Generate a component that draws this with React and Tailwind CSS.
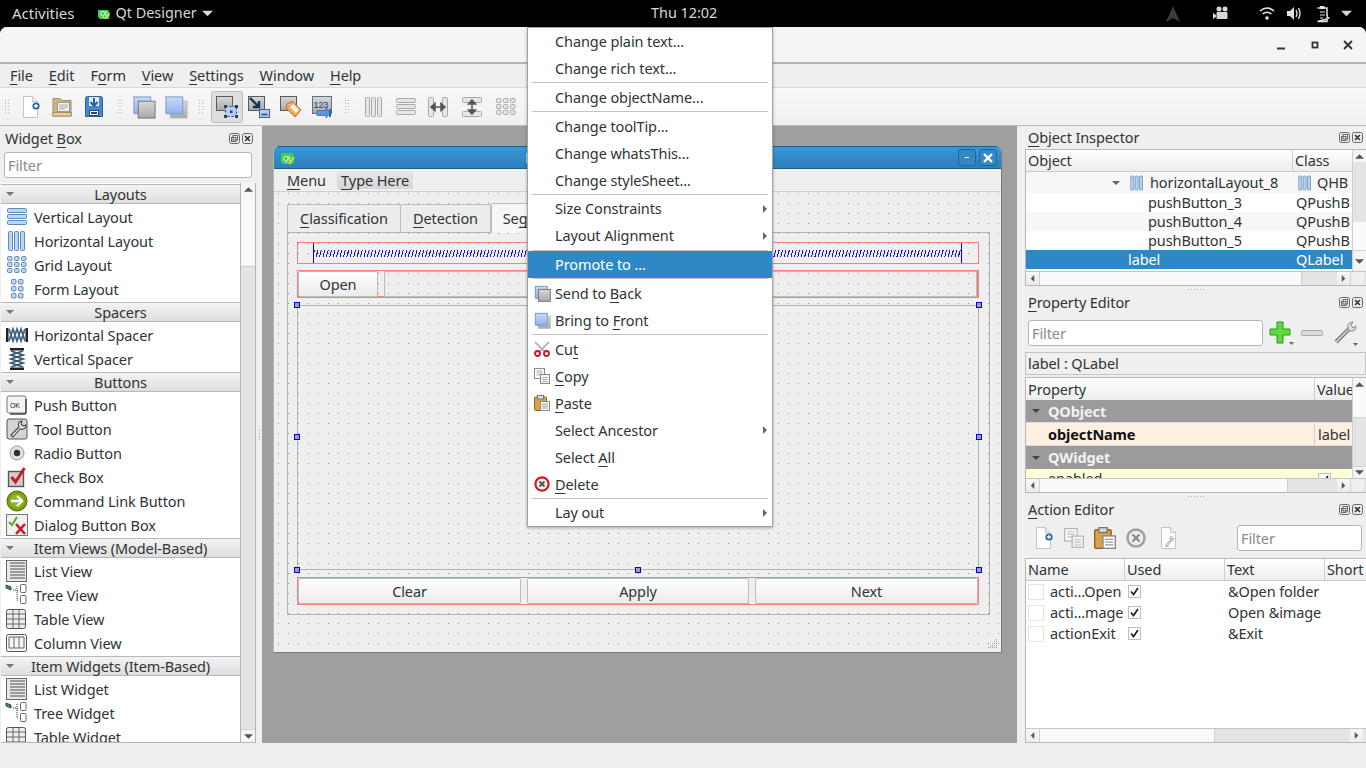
import React from "react";

const U = ({ children }) => <span className="underline underline-offset-[3px] decoration-1">{children}</span>;
const BLUE = { f: "#bcd6ee", s: "#5b8ab8" };
const GRAY = { f: "#e6e6e6", s: "#a8a8a8" };

function Lay({ k, t = BLUE, size = 22 }) {
  const r = [];
  if (k === "v") [2, 8, 14].forEach((y) => r.push([1, y, 20, 5]));
  if (k === "h") [2, 8, 14].forEach((x) => r.push([x, 1, 5, 20]));
  if (k === "g") [1, 8, 15].forEach((x) => [2, 8, 14].forEach((y) => r.push([x, y, 5.5, 5])));
  if (k === "f") [5, 12].forEach((x) => [1, 8, 15].forEach((y) => r.push([x, y, 5.5, 5.5])));
  return (
    <svg width={size} height={size} viewBox="0 0 22 22">
      {r.map((a, i) => (
        <rect key={i} x={a[0] + 0.5} y={a[1] + 0.5} width={a[2] - 1} height={a[3] - 1} rx="1" fill={t.f} stroke={t.s} />
      ))}
    </svg>
  );
}
function Split({ v }) {
  return (
    <svg width="24" height="24" viewBox="0 0 24 24">
      <g transform={v ? "rotate(90 12 12)" : ""}>
        <rect x="2.5" y="2.5" width="5" height="19" rx="1" fill="#e6e6e6" stroke="#a8a8a8" />
        <rect x="16.5" y="2.5" width="5" height="19" rx="1" fill="#e6e6e6" stroke="#a8a8a8" />
        <path d="M5 12h14M5 12l4-3.5v7zM19 12l-4-3.5v7z" fill="#555" stroke="#555" strokeWidth="1.5" />
      </g>
    </svg>
  );
}
function Stack({ front, size = 24 }) {
  const Blue = (x, y, w) => <rect x={x} y={y} width={w} height={w} fill="url(#gBlue)" stroke="#7d9acb" />;
  const Gray = (x, y, w) => <rect x={x} y={y} width={w} height={w} fill="url(#gGray)" stroke={front ? "#bbb" : "#777"} />;
  const w = size * 0.7;
  const a = size * 0.08;
  const b = size * 0.26;
  return (
    <svg width={size} height={size} viewBox={`0 0 ${size} ${size}`}>
      {front ? <>{Gray(b, b, w)}{Blue(a, a, w)}</> : <>{Blue(a, a, w)}{Gray(b, b, w)}</>}
    </svg>
  );
}
function Doc({ plus, size = 24, children }) {
  return (
    <svg width={size} height={size} viewBox="0 0 24 24">
      <path d="M5.5 1.5h9l5 5v16h-14z" fill="#fff" stroke="#c4c4c4" />
      <path d="M14.5 1.5v5h5" fill="#eee" stroke="#c4c4c4" />
      {plus && <><circle cx="18" cy="11" r="3.6" fill="#2b62a8" /><path d="M18 9v4M16 11h4" stroke="#fff" strokeWidth="1.3" /></>}
      {children}
    </svg>
  );
}
const Folder = () => (
  <svg width="24" height="24" viewBox="0 0 24 24">
    <path d="M3 21V3.5h7l2 2h9V21z" fill="#cdb384" stroke="#a98d5c" />
    <rect x="7.5" y="7.5" width="12" height="9" fill="#f4f4f4" stroke="#999" />
    <path d="M9 10h9M9 12h9M9 14h6" stroke="#aaa" />
    <path d="M2.5 17.5h19V21h-19z" fill="#e3cfa6" stroke="#a98d5c" />
  </svg>
);
const Save = () => (
  <svg width="24" height="24" viewBox="0 0 24 24">
    <path d="M3.5 3.5q0-2 2-2h13q2 0 2 2v18h-17z" fill="#4a86c8" stroke="#2a5f9e" />
    <path d="M7 2h10v9H7z" fill="#e4edf7" />
    <path d="M12 3v7M8.5 7l3.5 4 3.5-4" fill="none" stroke="#2a5f9e" strokeWidth="2" />
    <rect x="7.5" y="15.5" width="9" height="5" fill="#fff" stroke="#1d4a82" />
    <rect x="9" y="17" width="6" height="2" fill="#444" />
  </svg>
);
const Base = ({ children }) => (
  <svg width="24" height="24" viewBox="0 0 24 24">
    <rect x="1.5" y="1.5" width="16" height="14" fill="url(#gGray)" stroke="#5a5a5a" />
    {children}
  </svg>
);
const EditWidgets = () => (
  <Base>
    <rect x="10.5" y="11.5" width="11" height="10" fill="#b4cdf6" stroke="#27406e" strokeDasharray="2 2" />
    <rect x="9" y="10" width="3" height="3" fill="#27406e" /><rect x="20" y="10" width="3" height="3" fill="#27406e" />
    <rect x="9" y="20" width="3" height="3" fill="#27406e" /><rect x="20" y="20" width="3" height="3" fill="#27406e" />
    <rect x="15" y="15.5" width="2.5" height="2.5" fill="#27406e" />
  </Base>
);
const EditSignals = () => (
  <Base>
    <rect x="12.5" y="14.5" width="10" height="8" fill="#b4cdf6" stroke="#3c5f92" />
    <path d="M14.5 19.5h6" stroke="#3c5f92" strokeWidth="2" />
    <path d="M3 3l9 9M12 6v6H6" fill="none" stroke="#18325e" strokeWidth="2.4" />
  </Base>
);
const EditBuddy = () => (
  <Base>
    <path d="M8 9l5-3 9 9-6 7-9-9z" fill="#f6a860" stroke="#d46a16" />
    <path d="M11 12l3-3 6 6-3 3z" fill="#fff3e6" />
    <circle cx="10.5" cy="9.5" r="1.2" fill="#fff" stroke="#a45" strokeWidth=".5" />
  </Base>
);
const EditTab = () => (
  <svg width="24" height="24" viewBox="0 0 24 24">
    <rect x="1.5" y="1.5" width="19" height="17" fill="url(#gGray)" stroke="#5b6f8e" />
    <text x="2.5" y="13" fontSize="9" fontFamily="Liberation Sans" fill="#1d3d75">123</text>
    <path d="M6 18h13M19 14v8" stroke="#2b62a8" strokeWidth="2" />
    <path d="M6 15.5h9V13l4 5-4 5v-2.5H6z" fill="#5f97dd" stroke="#2b62a8" strokeWidth=".7" />
  </svg>
);
const Grip = ({ cls = "" }) => (
  <div className={`w-[5px] h-[22px] shrink-0 flex flex-wrap gap-[2px] content-center opacity-70 ${cls}`}>
    {Array.from({ length: 10 }).map((_, i) => <span key={i} className="w-[1px] h-[1px] bg-[#999]" />)}
  </div>
);
const TB = ({ children, on }) => (
  <div className={`w-[32px] h-[32px] shrink-0 flex items-center justify-center rounded-[3px] ${on ? "bg-[#dedede] border border-[#bcbcbc]" : ""}`}>{children}</div>
);

function WIcon({ k }) {
  const S = (c) => <svg width="24" height="24" viewBox="0 0 24 24">{c}</svg>;
  switch (k) {
    case "v": case "h": case "g": case "f": return <Lay k={k} />;
    case "hs": return S(<>
      <rect x="1" y="5" width="2.5" height="14" fill="#222" /><rect x="20.5" y="5" width="2.5" height="14" fill="#222" />
      <path d="M4 6l4 12 4-12 4 12 4-12M4 18L8 6l4 12 4-12 4 12" fill="none" stroke="#43647f" strokeWidth="1.8" />
    </>);
    case "vs": return S(<>
      <rect x="5" y="1" width="14" height="2.5" fill="#222" /><rect x="5" y="20.5" width="14" height="2.5" fill="#222" />
      <path d="M6 4l12 4-12 4 12 4-12 4M18 4L6 8l12 4-12 4 12 4" fill="none" stroke="#35586f" strokeWidth="1.8" />
    </>);
    case "push": return S(<>
      <rect x="2" y="3" width="19" height="17" rx="2" fill="#f4f4f4" stroke="#777" /><path d="M21 6v13q0 2-2 2H5" fill="none" stroke="#444" strokeWidth="1.4" />
      <text x="5" y="14.5" fontSize="7" fontFamily="Liberation Sans" fill="#222">OK</text>
    </>);
    case "tool": return S(<>
      <rect x="2" y="2" width="20" height="20" rx="2" fill="#d4d4d4" stroke="#555" />
      <path d="M6 18l8-8q-2-5 3-6l-1 3 2 2 3-1q0 5-6 4l-7 8z" fill="#eee" stroke="#444" strokeWidth="1.1" />
    </>);
    case "radio": return S(<><circle cx="12" cy="12" r="7" fill="#e0e0e0" stroke="#999" /><circle cx="12" cy="12" r="3.2" fill="#333" /></>);
    case "check": return S(<>
      <rect x="3.5" y="6.5" width="15" height="15" fill="#cfcfcf" stroke="#555" strokeWidth="1.4" />
      <path d="M6.5 12l4 5 9-14" fill="none" stroke="#d01820" strokeWidth="3" />
    </>);
    case "cmd": return S(<>
      <circle cx="12" cy="12" r="10" fill="#7da10c" stroke="#4c6805" />
      <circle cx="12" cy="12" r="7" fill="#a4c639" opacity=".5" />
      <path d="M6 12h10M12 7l5 5-5 5" fill="none" stroke="#fff" strokeWidth="2.4" />
    </>);
    case "dlg": return S(<>
      <rect x="1.5" y="1.5" width="21" height="21" fill="#f0f0f0" stroke="#777" />
      <path d="M4 9l3 3 5-8" fill="none" stroke="#4caf2a" strokeWidth="2" /><path d="M11 11l9 10M20 11l-9 10" stroke="#d01820" strokeWidth="2.6" />
    </>);
    case "list": return S(<>
      <rect x="1.5" y="1.5" width="20" height="21" fill="#e8e8e8" stroke="#666" />
      {[4, 7, 10, 13, 16, 19].map((y) => <path key={y} d={`M5 ${y}h15`} stroke="#888" strokeWidth="1.6" />)}
    </>);
    case "tree": return S(<>
      <path d="M1 2l5 2v3L1 5z" fill="#4e9a32" stroke="#225" strokeWidth=".8" />
      <path d="M8 7h4M12 3v14M12 8h2M12 17h2" stroke="#333" strokeDasharray="1 1" fill="none" />
      <rect x="15.5" y="1.5" width="5.5" height="8" rx="1" fill="#fff" stroke="#666" /><rect x="15.5" y="12.5" width="5.5" height="8" rx="1" fill="#fff" stroke="#666" />
    </>);
    case "table": return S(<>
      <rect x="1.5" y="2.5" width="19" height="19" rx="2" fill="#eee" stroke="#555" />
      <path d="M2 7h18M2 12h18M2 17h18M8 3v18M14 3v18" stroke="#666" />
    </>);
    case "col": return S(<>
      <rect x="1.5" y="3.5" width="20" height="17" rx="2" fill="#f6f6f6" stroke="#555" />
      <path d="M4 6h15v11H4zM9 6v11M14 6v11" fill="none" stroke="#666" />
    </>);
    default: return null;
  }
}

const Tri = ({ d = "d", c = "#555", size = 8 }) => {
  const p = { d: "M0 2h8L4 6z", u: "M0 6h8L4 2z", l: "M6 0v8L2 4z", r: "M2 0v8L6 4z" }[d];
  return <svg width={size} height={size} viewBox="0 0 8 8" className="shrink-0"><path d={p} fill={c} /></svg>;
};

const Row = ({ k, children }) => (
  <div className="h-[24px] shrink-0 flex items-center bg-white">
    <div className="w-[28px] pl-[4px] flex justify-center shrink-0"><WIcon k={k} /></div>
    <span className="ml-[5px]">{children}</span>
  </div>
);
const Cat = ({ children }) => (
  <div className="h-[22px] shrink-0 bg-white pt-[1px]">
    <div className="h-[20px] relative flex items-center justify-center bg-gradient-to-b from-[#f4f4f4] to-[#dedede] border-y border-[#b9b9b9]">
      <span className="absolute left-[5px]"><Tri c="#777" /></span>
      {children}
    </div>
  </div>
);

const DockBtns = () => (
  <div className="flex gap-[2px] items-center">
    <svg width="11" height="11" viewBox="0 0 11 11"><rect x=".5" y=".5" width="10" height="10" rx="2" fill="none" stroke="#666" /><rect x="4" y="2.5" width="4.5" height="4.5" fill="none" stroke="#666" /><rect x="2.5" y="4.5" width="4.5" height="4" fill="none" stroke="#666" /></svg>
    <svg width="11" height="11" viewBox="0 0 11 11"><rect x=".5" y=".5" width="10" height="10" rx="2" fill="#eee" stroke="#666" /><path d="M3 3l5 5M8 3l-5 5" stroke="#333" strokeWidth="1.6" /></svg>
  </div>
);
const DockTitle = ({ children, cls = "" }) => (
  <div className={`flex items-center justify-between shrink-0 ${cls}`}>
    <span>{children}</span><DockBtns />
  </div>
);
const Input = ({ cls = "" }) => (
  <div className={`bg-white border border-[#b5b5b5] rounded-[3px] flex items-center pl-[3px] text-[#8a8a8a] shrink-0 ${cls}`}>Filter</div>
);
const HBtn = ({ d }) => (
  <div className="w-[13px] self-stretch shrink-0 flex items-center justify-center bg-gradient-to-b from-[#f8f8f8] to-[#ececec] border-[#c8c8c8]"><Tri d={d} size={7} /></div>
);
const HScroll = ({ thumb, track, corner }) => (
  <div className="h-[14px] flex shrink-0 border-t border-[#c5c5c5] bg-[#e4e4e4]">
    <HBtn d="l" />
    <div className={`bg-[#fafafa] border-x border-[#d0d0d0] ${thumb}`} />
    <div className={`${track} bg-[#e4e4e4]`} />
    <HBtn d="r" />
    {corner && <div className="w-[14px] bg-[#efefef] border-l border-[#d0d0d0]" />}
  </div>
);
const VScroll = ({ head, thumb, gap, after, down = "h-[13px]", top = false }) => (
  <div className="w-[14px] shrink-0 flex flex-col border-l border-[#d0d0d0] bg-[#e4e4e4]">
    <div className={`${head} shrink-0 flex items-center justify-center bg-[#f6f6f6]`}><Tri d="u" size={9} /></div>
    {top && <div className={`${thumb} shrink-0 bg-[#fafafa] border-b border-[#d4d4d4]`} />}
    <div className={`${gap} shrink-0`} />
    {!top && <div className={`${thumb} shrink-0 bg-[#fafafa]`} />}
    <div className={`${down} shrink-0 flex items-center justify-center bg-[#f4f4f4] border-t border-[#d4d4d4] ${after || ""}`}><Tri size={9} /></div>
  </div>
);
const SplitDots = () => (
  <div className="h-[6px] shrink-0 flex items-center justify-center gap-[2px]">
    {[0, 1, 2, 3, 4, 5].map((i) => <span key={i} className="w-[1px] h-[1px] bg-[#aaa]" />)}
  </div>
);
const Th = ({ w, children, last }) => (
  <div className={`${w} h-full shrink-0 flex items-center pl-[2px] overflow-hidden ${last ? "" : "border-r border-[#cfcfcf]"}`}>{children}</div>
);
const Handle = ({ cls }) => <span className={`absolute w-[6px] h-[6px] bg-[#a0a0a0] border border-[#0000d8] ${cls}`} />;

const Sep = () => (
  <div className="h-[2px] px-[4px] flex items-center"><div className="h-[1px] w-full bg-[#c4c4c4]" /></div>
);
const MI = ({ icon, arrow, sel, children }) => (
  <div className={`h-[27px] shrink-0 flex items-center ${sel ? "bg-[#2e88c5] text-white" : ""}`}>
    <div className="w-[27px] shrink-0 flex items-center pl-[6px]">{icon}</div>
    <span className="flex-1">{children}</span>
    {arrow && <span className="mr-[3px]"><Tri d="r" c="#666" /></span>}
  </div>
);
const Scissors = () => (
  <svg width="16" height="16" viewBox="0 0 16 16">
    <path d="M1 1l10 10M15 1L5 11" stroke="#aaa" strokeWidth="1.6" />
    <circle cx="3.5" cy="12.5" r="2.5" fill="#fff" stroke="#c4161c" strokeWidth="1.8" /><circle cx="12.5" cy="12.5" r="2.5" fill="#fff" stroke="#c4161c" strokeWidth="1.8" />
  </svg>
);
const Copy = ({ size = 16, op = 1 }) => (
  <svg width={size} height={size} viewBox="0 0 16 16" opacity={op}>
    <rect x=".5" y=".5" width="10" height="10" fill="#fff" stroke="#8a8a8a" /><path d="M2.5 3h6M2.5 5h6M2.5 7h6" stroke="#aaa" />
    <rect x="6.5" y="6.5" width="9" height="9" fill="#f4f4f4" stroke="#8a8a8a" /><path d="M8.5 9.5h5M8.5 11.5h5M8.5 13.5h5" stroke="#aaa" />
  </svg>
);
const Paste = ({ size = 16 }) => (
  <svg width={size} height={size} viewBox="0 0 16 16">
    <rect x=".5" y="2" width="12" height="13.5" rx="1" fill="#d9a24d" stroke="#8d6323" />
    <rect x="3.5" y=".5" width="6" height="3.5" fill="#ddd" stroke="#777" />
    <rect x="6.5" y="6.5" width="9" height="9" fill="#fff" stroke="#888" /><path d="M8 9h6M8 11h6M8 13h6" stroke="#999" />
  </svg>
);
const Del = () => (
  <svg width="16" height="16" viewBox="0 0 16 16">
    <circle cx="8" cy="8" r="6.6" fill="#f2f2f2" stroke="#d01a22" strokeWidth="2.2" /><path d="M5.5 5.5l5 5M10.5 5.5l-5 5" stroke="#555" strokeWidth="2" />
  </svg>
);

const DOTS = "bg-[radial-gradient(circle_at_1.5px_1.5px,#8c8c8c_0.5px,transparent_0.8px)] bg-[size:10px_10px]";
const Btn = ({ cls, children }) => (
  <div className={`flex items-center justify-center bg-gradient-to-b from-white to-[#ececec] border border-[#bcbcbc] rounded-[2px] ${cls}`}>{children}</div>
);

const Cb = () => (
  <div className="w-[13px] h-[13px] bg-white border border-[#bdbdbd] flex items-center justify-center">
    <svg width="11" height="11" viewBox="0 0 11 11"><path d="M2 5.5l2.5 3L9 2" fill="none" stroke="#222" strokeWidth="1.7" /></svg>
  </div>
);

export default function App() {
  return (
    <div className="w-[1366px] h-[768px] overflow-hidden relative flex flex-col bg-black text-[#2e3436] text-[14.5px] tracking-[-0.1px] leading-none font-['Noto_Sans','Open_Sans',sans-serif]">
      <svg className="absolute w-0 h-0">
        <defs>
          <linearGradient id="gBlue" x1="0" y1="0" x2="0" y2="1"><stop offset="0" stopColor="#c9dcfb" /><stop offset="1" stopColor="#8fb1ea" /></linearGradient>
          <linearGradient id="gGray" x1="0" y1="0" x2="0" y2="1"><stop offset="0" stopColor="#d8d8d8" /><stop offset="1" stopColor="#a9a9a9" /></linearGradient>
        </defs>
      </svg>

      {/* GNOME top bar */}
      <div className="h-[27px] shrink-0 bg-black text-[#d8d8d8] text-[14.4px] tracking-normal flex items-center relative">
        <span className="ml-[12px] text-[15px]">Activities</span>
        <svg className="ml-[22px]" width="14" height="14" viewBox="0 0 14 14">
          <path d="M1 3h10l2 3-1 6H3l-2-2z" fill="#41cd52" />
          <path d="M8 12l4-5" stroke="#f0d040" strokeWidth="2" />
          <text x="3" y="9" fontSize="6.5" fill="#fff" fontFamily="Liberation Sans">Qt</text>
        </svg>
        <span className="ml-[5px]">Qt Designer</span>
        <span className="ml-[5px]"><Tri c="#d8d8d8" size={11} /></span>
        <span className="absolute left-[651px]">Thu 12:02</span>
        <div className="absolute left-[1165px] top-0 h-[27px] w-[190px]">
          <svg className="absolute left-[0px] top-[6px]" width="16" height="16" viewBox="0 0 16 16"><path d="M8 0L1 16l7-4 7 4z" fill="#3c3c3c" /></svg>
          <svg className="absolute left-[48px] top-[6px]" width="16" height="14" viewBox="0 0 16 14"><circle cx="6" cy="3" r="2.5" fill="#d8d8d8" /><circle cx="12" cy="3" r="2.5" fill="#d8d8d8" /><rect x="3.5" y="6" width="11" height="7" rx="1" fill="#d8d8d8" /><path d="M0 7l3 2v2l-3 2z" fill="#d8d8d8" /></svg>
          <svg className="absolute left-[94px] top-[6px]" width="16" height="15" viewBox="0 0 16 15" fill="none" stroke="#e0e0e0"><path d="M1 5q7-6 14 0" strokeWidth="1.6" /><path d="M3.5 8q4.5-3.6 9 0" strokeWidth="1.6" /><circle cx="8" cy="12" r="1.8" fill="#e0e0e0" stroke="none" /></svg>
          <svg className="absolute left-[121px] top-[6px]" width="16" height="15" viewBox="0 0 16 15"><path d="M1 5h3l4-4v13l-4-4H1z" fill="#e0e0e0" /><path d="M10 4q2 3.500 0 7M12.500 2q3 5.500 0 11" fill="none" stroke="#e0e0e0" strokeWidth="1.4" /></svg>
          <svg className="absolute left-[150px] top-[5px]" width="16" height="18" viewBox="0 0 16 18"><path d="M2.500 3h9.500v8M12 14v2.500H2.500z" fill="none" stroke="#e0e0e0" strokeWidth="1.500" /><rect x="5" y="1" width="4.500" height="3" fill="#e0e0e0" /><path d="M5 7h5M5 10h5M5 13h3" stroke="#e0e0e0" /><path d="M13 9l-2 4h2l-1 3 3-4h-2z" fill="#e0e0e0" /></svg>
          <span className="absolute left-[176px] top-[8px]"><Tri c="#d8d8d8" size={11} /></span>
        </div>
      </div>

      {/* Window */}
      <div className="flex-1 flex flex-col bg-[#efefef] rounded-t-[7px] overflow-hidden">
        <div className="h-[37px] shrink-0 bg-[#f5f5f5] border-b-2 border-[#b5b5b0] flex items-center justify-end">
          <svg width="10" height="10" viewBox="0 0 10 10" className="mr-[24px]"><path d="M1 8.500h8" stroke="#2e3436" strokeWidth="1.800" /></svg>
          <svg width="10" height="10" viewBox="0 0 10 10" className="mr-[23px]"><rect x="2.500" y="2.500" width="5" height="5" fill="none" stroke="#2e3436" strokeWidth="1.800" /></svg>
          <svg width="10" height="10" viewBox="0 0 10 10" className="mr-[13px]"><path d="M1 1l8 8M9 1l-8 8" stroke="#2e3436" strokeWidth="1.800" /></svg>
        </div>
        <div className="h-[24px] shrink-0 flex items-center gap-[16px] pl-[10px] bg-[#efefef] border-b border-[#d9d9d9]">
          <span><U>F</U>ile</span><span><U>E</U>dit</span><span>F<U>o</U>rm</span><span><U>V</U>iew</span><span><U>S</U>ettings</span><span><U>W</U>indow</span><span><U>H</U>elp</span>
        </div>
        <div className="h-[38px] shrink-0 flex items-center pl-[5px] bg-gradient-to-b from-[#f8f8f8] to-[#f0f0f0] border-b border-[#bdbdbd]">
          <Grip />
          <div className="w-[4px]" />
          <TB><Doc plus /></TB><TB><Folder /></TB><TB><Save /></TB>
          <Grip cls="ml-[8px]" />
          <div className="w-[5px]" />
          <TB><Stack /></TB><TB><Stack front /></TB>
          <Grip cls="ml-[7px]" />
          <div className="w-[7px]" />
          <TB on><EditWidgets /></TB><TB><EditSignals /></TB><TB><EditBuddy /></TB><TB><EditTab /></TB>
          <Grip cls="ml-[6px]" />
          <div className="w-[8px]" />
          <TB><Lay k="h" t={GRAY} /></TB><TB><Lay k="v" t={GRAY} /></TB>
          <TB><Split /></TB><div className="w-[2px]" /><TB><Split v /></TB><div className="w-[2px]" /><TB><Lay k="g" t={GRAY} /></TB>
        </div>

        {/* Main */}
        <div className="h-[617px] shrink-0 flex">
          {/* Widget box */}
          <div className="w-[262px] shrink-0 flex flex-col relative">
            <DockTitle cls="h-[24px] pl-[5px] pr-[9px]">Widget <U>B</U>ox</DockTitle>
            <Input cls="ml-[4px] w-[248px] h-[26px] mt-[2px]" />
            <div className="mt-[5px] ml-[1px] w-[255px] h-[560px] flex overflow-hidden border-b border-[#b5b5b5] border-r">
              <div className="w-[240px] shrink-0 flex flex-col overflow-hidden border-r border-[#b5b5b5]">
                <Cat>Layouts</Cat>
                <Row k="v">Vertical Layout</Row><Row k="h">Horizontal Layout</Row><Row k="g">Grid Layout</Row><Row k="f">Form Layout</Row>
                <Cat>Spacers</Cat>
                <Row k="hs">Horizontal Spacer</Row><Row k="vs">Vertical Spacer</Row>
                <Cat>Buttons</Cat>
                <Row k="push">Push Button</Row><Row k="tool">Tool Button</Row><Row k="radio">Radio Button</Row><Row k="check">Check Box</Row><Row k="cmd">Command Link Button</Row><Row k="dlg">Dialog Button Box</Row>
                <Cat>Item Views (Model-Based)</Cat>
                <Row k="list">List View</Row><Row k="tree">Tree View</Row><Row k="table">Table View</Row><Row k="col">Column View</Row>
                <Cat>Item Widgets (Item-Based)</Cat>
                <Row k="list">List Widget</Row><Row k="tree">Tree Widget</Row><Row k="table">Table Widget</Row>
              </div>
              <div className="flex-1 flex flex-col bg-[#e4e4e4]">
                <div className="h-[13px] flex items-center justify-center bg-[#f6f6f6]"><Tri d="u" size={9} /></div>
                <div className="h-[71px] bg-[#f8f8f8] border-b border-[#d0d0d0]" />
                <div className="flex-1" />
                <div className="h-[13px] flex items-center justify-center bg-[#f6f6f6] border-t border-[#d0d0d0]"><Tri size={9} /></div>
              </div>
            </div>
            <div className="absolute left-[259px] top-[304px] flex flex-col gap-[2px]">
              {[0, 1, 2, 3].map((i) => <span key={i} className="w-[1px] h-[1px] bg-[#aaa]" />)}
            </div>
          </div>

          {/* MDI area */}
          <div className="w-[755px] shrink-0 bg-[#9f9f9f] pl-[11px] pt-[20px]">
            <div className="w-[729px] h-[507px] flex flex-col bg-[#efefef] border-r border-b border-[#787878] border-l border-l-[#b5b5b5] rounded-t-[6px] overflow-hidden">
              <div className="h-[23px] shrink-0 flex items-center bg-gradient-to-b from-[#3498db] to-[#2f7fb8] border-t border-b border-[#1b5f8e] relative">
                <svg className="ml-[6px]" width="16" height="14" viewBox="0 0 16 14">
                  <path d="M1 2h11l2 2v7l-2 2H3l-2-2z" fill="#41cd52" /><path d="M9 13l5-7" stroke="#f0d040" strokeWidth="2" />
                  <text x="3" y="9.500" fontSize="7" fill="#fff" fontFamily="Liberation Sans">Qt</text>
                </svg>
                <span className="absolute left-[251px] text-white text-[14px]">MainWindow - untitled</span>
                <div className="ml-auto mr-[4px] flex gap-[3px]">
                  <div className="w-[18px] h-[17px] rounded-[3px] border border-[#1f6797] bg-[#3389c6] flex items-center justify-center"><span className="w-[4px] h-[1.500px] bg-white" /></div>
                  <div className="w-[18px] h-[17px] rounded-[3px] border border-[#1f6797] bg-[#3389c6] flex items-center justify-center">
                    <svg width="10" height="10" viewBox="0 0 10 10"><path d="M1 1l8 8M9 1l-8 8" stroke="#fff" strokeWidth="2.400" /></svg>
                  </div>
                </div>
              </div>
              <div className="h-[23px] shrink-0 flex items-center pl-[13px] border-b border-[#cfcfcf]">
                <span><U>M</U>enu</span>
                <span className="ml-[11px] h-[18px] px-[4px] flex items-center bg-gradient-to-b from-[#e6e6e6] to-[#d6d6d6]"><U>T</U>ype Here</span>
              </div>
              <div className={`flex-1 relative pl-[13px] pt-[11px] flex flex-col bg-[position:3px_0px] ${DOTS}`}>
                <div className="h-[29px] flex items-end shrink-0">
                  <div className="w-[114px] h-[28px] bg-[#ececec] border border-b-0 border-[#bcbcbc] rounded-t-[2px] flex items-center justify-center"><span><U>C</U>lassification</span></div>
                  <div className="w-[90px] h-[28px] bg-[#ececec] border border-b-0 border-l-0 border-[#bcbcbc] rounded-t-[2px] flex items-center justify-center"><span><U>D</U>etection</span></div>
                  <div className="w-[118px] h-[30px] -mb-[1px] relative z-10 bg-[#f6f6f6] border border-b-0 border-[#bcbcbc] rounded-t-[2px] flex items-center justify-center"><span>Se<U>g</U>mentation</span></div>
                </div>
                <div className="w-[703px] h-[383px] shrink-0 border border-[#b3b3b3] pl-[9px] pt-[9px] flex flex-col">
                  <div className="w-[682px] h-[22px] shrink-0 border border-[#f47f7f] flex items-center pl-[15px] pr-[16px]">
                    <div className="w-full h-[20px] border-x border-x-[#0000ff] flex items-center"><div className="w-full h-[7px] bg-[repeating-linear-gradient(105deg,#1010e8_0,#1010e8_1px,transparent_1px,transparent_3.3px)]" /></div>
                  </div>
                  <div className="w-[682px] h-[28px] mt-[6px] shrink-0 border border-r-2 border-b-2 border-[#f47f7f] flex">
                    <Btn cls="w-[80px] h-[26px] shrink-0">Open</Btn>
                    <div className="ml-[6px] flex-1 h-[26px] border border-[#bdbdbd]" />
                  </div>
                  <div className="w-[682px] h-[265px] mt-[7px] shrink-0 border border-[#b4b4b4] relative">
                    <Handle cls="-left-[4px] -top-[4px]" /><Handle cls="-right-[4px] -top-[4px]" />
                    <Handle cls="-left-[4px] top-[128px]" /><Handle cls="-right-[4px] top-[128px]" />
                    <Handle cls="-left-[4px] -bottom-[4px]" /><Handle cls="left-[337px] -bottom-[4px]" /><Handle cls="-right-[4px] -bottom-[4px]" />
                  </div>
                  <div className="w-[682px] h-[28px] mt-[7px] shrink-0 border border-[#f47f7f] flex justify-between">
                    <Btn cls="w-[223px] h-[26px]">Clear</Btn>
                    <Btn cls="w-[222px] h-[26px]">Apply</Btn>
                    <Btn cls="w-[223px] h-[26px]">Next</Btn>
                  </div>
                </div>
                <svg className="absolute right-[3px] bottom-[3px]" width="11" height="11" viewBox="0 0 11 11" fill="#999">
                  {[[9, 1], [7, 3], [9, 3], [5, 5], [7, 5], [9, 5], [3, 7], [5, 7], [7, 7], [9, 7], [1, 9], [3, 9], [5, 9], [7, 9], [9, 9]].map((p, i) => <rect key={i} x={p[0]} y={p[1]} width="1" height="1" />)}
                </svg>
              </div>
            </div>
          </div>

          {/* Right docks */}
          <div className="w-[349px] shrink-0 flex flex-col pl-[8px]">
            <DockTitle cls="h-[23px] pl-[3px] pr-[3px]"><U>O</U>bject Inspector</DockTitle>
            <div className="h-[137px] shrink-0 border-y border-l border-[#b8b8b8] flex flex-col">
              <div className="flex-1 flex min-h-0">
                <div className="w-[326px] shrink-0 flex flex-col">
                  <div className="h-[22px] shrink-0 flex bg-gradient-to-b from-white to-[#ededed] border-b border-[#c8c8c8]">
                    <Th w="w-[267px]">Object</Th><Th w="w-[59px]" last>Class</Th>
                  </div>
                  <div className="h-[21px] flex bg-[#f7f7f7] items-center">
                    <div className="w-[267px] shrink-0 flex items-center pl-[86px]"><Tri c="#666" /><span className="ml-[9px]"><Lay k="h" size={16} /></span><span className="ml-[5px]">horizontalLayout_8</span></div>
                    <div className="flex items-center pl-[4px]"><Lay k="h" size={16} /><span className="ml-[4px]">QHB</span></div>
                  </div>
                  {[["pushButton_3", "bg-white"], ["pushButton_4", "bg-[#f7f7f7]"], ["pushButton_5", "bg-white"]].map(([n, c]) => (
                    <div key={n} className={`h-[19px] flex items-center ${c}`}>
                      <div className="w-[267px] shrink-0 pl-[122px]">{n}</div><div className="pl-[3px] overflow-hidden whitespace-nowrap">QPushB</div>
                    </div>
                  ))}
                  <div className="h-[19px] flex items-center bg-[#2e88c5] text-white">
                    <div className="w-[267px] shrink-0 pl-[102px]">label</div><div className="pl-[3px]">QLabel</div>
                  </div>
                  <div className="flex-1 bg-white" />
                </div>
                <VScroll head="h-[12px]" gap="h-[60px]" thumb="h-[28px]" down="flex-1" />
              </div>
              <HScroll thumb="w-[263px]" track="w-[35px]" corner />
            </div>
            <SplitDots />
            <DockTitle cls="h-[21px] pl-[3px] pr-[3px]"><U>P</U>roperty Editor</DockTitle>
            <div className="mt-[7px] h-[26px] shrink-0 flex items-center">
              <Input cls="ml-[3px] w-[235px] h-[26px]" />
              <svg className="ml-[5px]" width="26" height="26" viewBox="0 0 26 26">
                <path d="M9 2h6v7h7v6h-7v8H9v-8H2V9h7z" fill="#5fdc3c" stroke="#1f9a16" />
                <path d="M21 22h5l-2.500 3z" fill="#666" />
              </svg>
              <svg className="ml-[6px]" width="24" height="26" viewBox="0 0 24 26"><rect x="1.500" y="10.500" width="21" height="5" rx="1" fill="#dcdcdc" stroke="#a8a8a8" /></svg>
              <svg className="ml-[9px]" width="26" height="26" viewBox="0 0 26 26">
                <path d="M3 22L17 8" stroke="#777" strokeWidth="4" /><path d="M3 22L17 8" stroke="#ddd" strokeWidth="1.500" />
                <path d="M15 9q-2-6 5-7l-2 3 2 3 3-2q0 6-6 5z" fill="#ddd" stroke="#888" />
                <path d="M20 23h5l-2.500 3z" fill="#666" />
              </svg>
            </div>
            <div className="mt-[6px] h-[23px] shrink-0 border border-[#c4c4c4] flex items-center pl-[2px]">label : QLabel</div>
            <div className="mt-[2px] h-[116px] shrink-0 border-y border-l border-[#b8b8b8] flex flex-col">
              <div className="flex-1 flex min-h-0">
                <div className="w-[326px] shrink-0 flex flex-col overflow-hidden">
                  <div className="h-[22px] shrink-0 flex bg-gradient-to-b from-white to-[#ededed]">
                    <Th w="w-[289px]">Property</Th><Th w="w-[37px]" last>Value</Th>
                  </div>
                  <div className="h-[23px] shrink-0 bg-[#9b9b9b] text-[#f2f2f2] font-bold flex items-center pl-[6px] border-b border-[#ddd]"><Tri c="#444" /><span className="ml-[8px]">QObject</span></div>
                  <div className="h-[23px] shrink-0 bg-[#fdf0e0] flex items-center border-b border-[#ddd]">
                    <div className="w-[289px] shrink-0 pl-[22px] font-bold text-[#111] border-r border-[#d0d0d0] h-full flex items-center">objectName</div><div className="pl-[3px]">label</div>
                  </div>
                  <div className="h-[23px] shrink-0 bg-[#9b9b9b] text-[#f2f2f2] font-bold flex items-center pl-[6px]"><Tri c="#444" /><span className="ml-[8px]">QWidget</span></div>
                  <div className="flex-1 bg-[#ffffd8] flex overflow-hidden">
                    <div className="w-[289px] shrink-0 pl-[22px] pt-[2px]">enabled</div>
                    <div className="ml-[3px] mt-[4px]"><Cb /></div>
                  </div>
                </div>
                <VScroll head="h-[13px]" thumb="h-[27px]" gap="h-[48px]" down="flex-1" top />
              </div>
              <HScroll thumb="w-[249px]" track="w-[49px]" corner />
            </div>
            <SplitDots />
            <DockTitle cls="h-[21px] pl-[3px] pr-[3px]"><U>A</U>ction Editor</DockTitle>
            <div className="mt-[5px] h-[26px] shrink-0 flex items-center">
              <div className="ml-[6px] w-[24px] flex justify-center"><Doc plus /></div>
              <div className="ml-[7px] w-[24px] flex justify-center"><Copy size={20} op={0.55} /></div>
              <div className="ml-[7px] w-[24px] flex justify-center"><Paste size={22} /></div>
              <svg className="ml-[7px]" width="24" height="24" viewBox="0 0 24 24"><circle cx="12" cy="12" r="8.500" fill="#eee" stroke="#a0a0a0" strokeWidth="2.500" /><path d="M8.500 8.500l7 7M15.500 8.500l-7 7" stroke="#8a8a8a" strokeWidth="2.200" /></svg>
              <div className="ml-[8px]">
                <Doc size={24}><path d="M9 20l5-6q-1-3 2-4l-1 2 1 1 2-1q0 3-3 3l-4 6z" fill="#ddd" stroke="#999" strokeWidth=".7" /></Doc>
              </div>
              <Input cls="ml-[57px] w-[125px] h-[26px]" />
            </div>
            <div className="mt-[7px] h-[185px] shrink-0 border-y border-l border-[#b8b8b8] flex flex-col bg-white">
              <div className="h-[22px] shrink-0 flex bg-gradient-to-b from-white to-[#ededed] border-b border-[#c8c8c8]">
                <Th w="w-[99px]">Name</Th><Th w="w-[100px]">Used</Th><Th w="w-[100px]">Text</Th><Th w="w-[41px]" last>Short</Th>
              </div>
              {[["acti...Open", "&Open folder"], ["acti...mage", "Open &image"], ["actionExit", "&Exit"]].map(([a, b]) => (
                <div key={a} className="h-[21px] shrink-0 flex items-center">
                  <div className="w-[99px] flex items-center pl-[2px]">
                    <span className="w-[16px] h-[16px] border border-[#e4e4e4] shrink-0" /><span className="ml-[6px] whitespace-nowrap">{a}</span>
                  </div>
                  <div className="w-[100px] pl-[3px]"><Cb /></div>
                  <div className="pl-[3px]">{b}</div>
                </div>
              ))}
              <div className="flex-1" />
              <HScroll thumb="w-[176px]" track="w-[135px]" />
            </div>
          </div>
        </div>
        <div className="flex-1 bg-[#efefef]" />
      </div>

      {/* Context menu */}
      <div className="absolute z-20 left-[527px] top-[27px] w-[246px] h-[500px] bg-white border border-[#a2a2a2] shadow-[0_1px_3px_rgba(0,0,0,0.3)] flex flex-col">
        <MI>Change plain text...</MI>
        <MI>Change rich text...</MI>
        <Sep />
        <MI>Change objectName...</MI>
        <Sep />
        <MI>Change toolTip...</MI>
        <MI>Change whatsThis...</MI>
        <MI>Change styleSheet...</MI>
        <Sep />
        <MI arrow>Size Constraints</MI>
        <MI arrow>Layout Alignment</MI>
        <Sep />
        <MI sel>Promote to ...</MI>
        <Sep />
        <MI icon={<Stack size={17} />}>Send to <U>B</U>ack</MI>
        <MI icon={<Stack size={17} front />}>Bring to <U>F</U>ront</MI>
        <Sep />
        <MI icon={<Scissors />}>Cu<U>t</U></MI>
        <MI icon={<Copy />}><U>C</U>opy</MI>
        <MI icon={<Paste />}><U>P</U>aste</MI>
        <MI arrow>Select Ancestor</MI>
        <MI>Select <U>A</U>ll</MI>
        <MI icon={<Del />}><U>D</U>elete</MI>
        <Sep />
        <MI arrow>Lay out</MI>
      </div>
    </div>
  );
}
